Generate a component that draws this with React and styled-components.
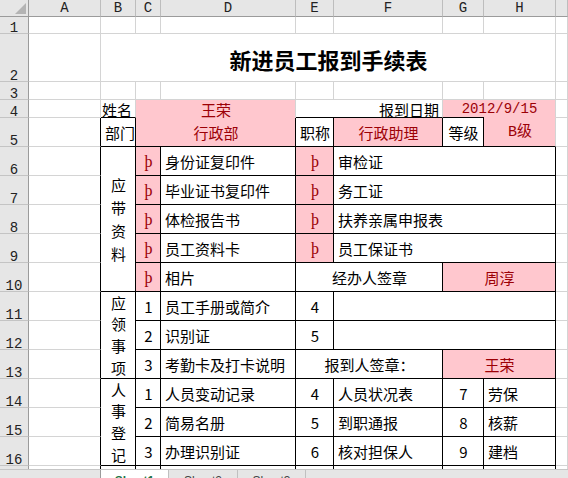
import React from 'react'
import styled, { createGlobalStyle } from 'styled-components'

const GlobalStyle = createGlobalStyle`
  html, body {
    margin: 0;
    padding: 0;
    background: #fff;
    overflow: hidden;
  }
  body {
    font-family: "Noto Sans CJK SC", "Liberation Sans", sans-serif;
  }
`

const LINE = { g: '#d4d4d4', k: '#000', n: 'transparent' }
const ALIGN = { left: 'flex-start', center: 'center', right: 'flex-end' }
const K = 'k'

const Window = styled.div`
  width: 568px;
  height: 478px;
  display: flex;
  flex-direction: column;
  overflow: hidden;
`

const Sheet = styled.div`
  flex: none;
  height: 469px;
  overflow: hidden;
  display: grid;
  grid-template-columns: 29px 72px 35px 25px 135px 38px 109px 41px 72px 12px;
  grid-template-rows: 17px 17px 48px 18px 18px 29px repeat(12, 29px);
`

const Corner = styled.div`
  box-sizing: border-box;
  background: #e6e6e6;
  border-right: 1px solid #9b9b9b;
  border-bottom: 1px solid #9b9b9b;
  display: flex;
  align-items: flex-end;
  justify-content: flex-end;
  padding: 0 2px 2px 0;
`

const ColHead = styled.div`
  box-sizing: border-box;
  background: #e6e6e6;
  border-right: 1px solid #bdbdbd;
  border-bottom: 1px solid #9b9b9b;
  display: flex;
  align-items: center;
  justify-content: center;
  font: 14px/14px "Liberation Mono", monospace;
  color: #222;
`

const RowHead = styled.div`
  box-sizing: border-box;
  background: #e6e6e6;
  border-right: 1px solid #9b9b9b;
  border-bottom: 1px solid #c4c4c4;
  display: flex;
  align-items: flex-end;
  justify-content: center;
  font: 14px/10px "Liberation Mono", monospace;
  color: #222;
`

const Cell = styled.div`
  box-sizing: border-box;
  grid-column: span ${p => p.$span || 1};
  grid-row: span ${p => p.$rows || 1};
  display: flex;
  align-items: ${p => (p.$v === 'bottom' ? 'flex-end' : 'center')};
  justify-content: ${p => ALIGN[p.$align || 'left']};
  padding: 0 3px 0 4px;
  border-right: 1px solid ${p => LINE[p.$r || 'g']};
  border-bottom: 1px solid ${p => LINE[p.$b || 'g']};
  background-color: ${p => (p.$bad ? '#ffc7ce' : '#fff')};
  background-image: ${p => (p.$under ? 'linear-gradient(#000, #000)' : 'none')};
  background-size: ${p => p.$under || 0}px 1px;
  background-position: left bottom;
  background-repeat: no-repeat;
  background-origin: border-box;
  color: ${p => (p.$bad ? '#9c0006' : '#000')};
  font-size: 15px;
  line-height: 15px;
  white-space: nowrap;
`

const Title = styled.span`
  font-size: 22px;
  line-height: 22px;
  font-weight: 700;
  padding-top: 2px;
`

const Mono = styled.span`
  font-family: "Liberation Mono", "Noto Sans CJK SC", monospace;
  font-size: ${p => p.$size || 15}px;
`

const Check = styled.span`
  font-family: "Liberation Serif", serif;
  font-size: 16px;
`

const Stacked = styled.span`
  width: 15px;
  text-align: center;
  white-space: normal;
  word-break: break-all;
  line-height: ${p => p.$lh}px;
`

const TabBar = styled.div`
  flex: none;
  height: 40px;
  display: flex;
  background: #e6e6e6;
  border-top: 1px solid #c6c6c6;
`

const NavArea = styled.div`
  width: 100px;
`

const Tab = styled.div`
  box-sizing: border-box;
  width: ${p => p.$w}px;
  padding-top: 4px;
  text-align: center;
  font: ${p => (p.$active ? 700 : 400)} 12px/14px "Liberation Sans", sans-serif;
  color: ${p => (p.$active ? '#217346' : '#444')};
  background: ${p => (p.$active ? '#fff' : 'transparent')};
  border-left: ${p => (p.$active ? '1px solid #9b9b9b' : 'none')};
  border-right: 1px solid #c0c0c0;
`

const AddButton = styled.div`
  padding: 5px 0 0 33px;
  color: #777;
`

const blank = n => Array.from({ length: n }, () => ({}))

// one entry per sheet row; A..I cells, merged ones carry span / rows
const rows = [
  { n: 1, cells: blank(9) },
  { n: 2, cells: [{}, { span: 7, align: 'center', title: '新进员工报到手续表' }, {}] },
  { n: 3, cells: blank(9) },
  {
    n: 4,
    v: 'bottom',
    cells: [
      {},
      { t: '姓名', align: 'right', b: K },
      { t: '王荣', span: 2, bad: true, align: 'center', b: 'n' },
      { t: '报到日期', span: 2, align: 'right', b: K },
      { t: '2012/9/15', mono: 14, span: 2, bad: true, align: 'center', b: 'n', under: 41 },
      {},
    ],
  },
  {
    n: 5,
    cells: [
      { r: K },
      { t: '部门', r: K, b: K },
      { t: '行政部', span: 2, bad: true, align: 'center', r: K, b: K },
      { t: '职称', r: K, b: K },
      { t: '行政助理', bad: true, align: 'center', r: K, b: K },
      { t: '等级', align: 'center', r: K, b: K },
      { t: 'B级', mono: 15, bad: true, align: 'center', b: K },
      {},
    ],
  },
  {
    n: 6,
    cells: [
      { r: K },
      { stack: '应带资料', lh: 23, rows: 5, align: 'center', r: K, b: K },
      { check: true },
      { t: '身份证复印件', r: K, b: K },
      { check: true },
      { t: '审检证', span: 3, r: K, b: K },
      {},
    ],
  },
  { n: 7, cells: [{ r: K }, { check: true }, { t: '毕业证书复印件', r: K, b: K }, { check: true }, { t: '务工证', span: 3, r: K, b: K }, {}] },
  { n: 8, cells: [{ r: K }, { check: true }, { t: '体检报告书', r: K, b: K }, { check: true }, { t: '扶养亲属申报表', span: 3, r: K, b: K }, {}] },
  { n: 9, cells: [{ r: K }, { check: true }, { t: '员工资料卡', r: K, b: K }, { check: true }, { t: '员工保证书', span: 3, r: K, b: K }, {}] },
  {
    n: 10,
    cells: [
      { r: K },
      { check: true },
      { t: '相片', r: K, b: K },
      { t: '经办人签章', span: 2, align: 'center', r: K, b: K },
      { t: '周淳', span: 2, bad: true, align: 'center', r: K, b: K },
      {},
    ],
  },
  {
    n: 11,
    cells: [
      { r: K },
      { stack: '应领事项', lh: 21.75, rows: 3, align: 'center', r: K, b: K },
      { t: '1', align: 'center', r: K, b: K },
      { t: '员工手册或简介', r: K, b: K },
      { t: '4', align: 'center', r: K, b: K },
      { t: '', span: 3, r: K, b: K },
      {},
    ],
  },
  {
    n: 12,
    cells: [
      { r: K },
      { t: '2', align: 'center', r: K, b: K },
      { t: '识别证', r: K, b: K },
      { t: '5', align: 'center', r: K, b: K },
      { t: '', span: 3, r: K, b: K },
      {},
    ],
  },
  {
    n: 13,
    cells: [
      { r: K },
      { t: '3', align: 'center', r: K, b: K },
      { t: '考勤卡及打卡说明', r: K, b: K },
      { t: '报到人签章：', span: 2, align: 'center', r: K, b: K },
      { t: '王荣', span: 2, bad: true, align: 'center', r: K, b: K },
      {},
    ],
  },
  {
    n: 14,
    cells: [
      { r: K },
      { stack: '人事登记', lh: 21.75, rows: 3, align: 'center', r: K, b: K },
      { t: '1', align: 'center', r: K, b: K },
      { t: '人员变动记录', r: K, b: K },
      { t: '4', align: 'center', r: K, b: K },
      { t: '人员状况表', r: K, b: K },
      { t: '7', align: 'center', r: K, b: K },
      { t: '劳保', r: K, b: K },
      {},
    ],
  },
  {
    n: 15,
    cells: [
      { r: K },
      { t: '2', align: 'center', r: K, b: K },
      { t: '简易名册', r: K, b: K },
      { t: '5', align: 'center', r: K, b: K },
      { t: '到职通报', r: K, b: K },
      { t: '8', align: 'center', r: K, b: K },
      { t: '核薪', r: K, b: K },
      {},
    ],
  },
  {
    n: 16,
    cells: [
      { r: K },
      { t: '3', align: 'center', r: K, b: K },
      { t: '办理识别证', r: K, b: K },
      { t: '6', align: 'center', r: K, b: K },
      { t: '核对担保人', r: K, b: K },
      { t: '9', align: 'center', r: K, b: K },
      { t: '建档', r: K, b: K },
      {},
    ],
  },
  { n: 17, cells: [{ r: K }, ...Array.from({ length: 7 }, () => ({ r: K, b: K })), {}] },
]

const renderContent = c => {
  if (c.title) return <Title>{c.title}</Title>
  if (c.stack) return <Stacked $lh={c.lh}>{c.stack}</Stacked>
  if (c.check) return <Check>þ</Check>
  if (c.mono) return <Mono $size={c.mono}>{c.t}</Mono>
  return c.t
}

const SheetCell = ({ c, v }) => {
  const cell = c.check ? { ...c, bad: true, align: 'center', r: K, b: K } : c
  return (
    <Cell
      $span={cell.span}
      $rows={cell.rows}
      $align={cell.align}
      $v={v}
      $r={cell.r}
      $b={cell.b}
      $bad={cell.bad}
      $under={cell.under}
    >
      {renderContent(cell)}
    </Cell>
  )
}

const App = () => (
  <Window>
    <GlobalStyle />
    <Sheet>
      <Corner>
        <svg width="11" height="11" viewBox="0 0 11 11">
          <polygon points="11,0 11,11 0,11" fill="#b4b4b4" />
        </svg>
      </Corner>
      {['A', 'B', 'C', 'D', 'E', 'F', 'G', 'H', ''].map((l, i) => (
        <ColHead key={i}>{l}</ColHead>
      ))}
      {rows.map(row => (
        <React.Fragment key={row.n}>
          <RowHead>{row.n}</RowHead>
          {row.cells.map((c, i) => (
            <SheetCell key={i} c={c} v={row.v} />
          ))}
        </React.Fragment>
      ))}
    </Sheet>
    <TabBar>
      <NavArea />
      <Tab $w={69} $active>Sheet1</Tab>
      <Tab $w={69}>Sheet2</Tab>
      <Tab $w={68}>Sheet3</Tab>
      <AddButton>
        <svg width="16" height="16" viewBox="0 0 16 16">
          <circle cx="8" cy="8" r="7" fill="none" stroke="#808080" strokeWidth="1" />
          <path d="M8 4.5v7M4.5 8h7" stroke="#808080" strokeWidth="1" />
        </svg>
      </AddButton>
    </TabBar>
  </Window>
)

export default App
